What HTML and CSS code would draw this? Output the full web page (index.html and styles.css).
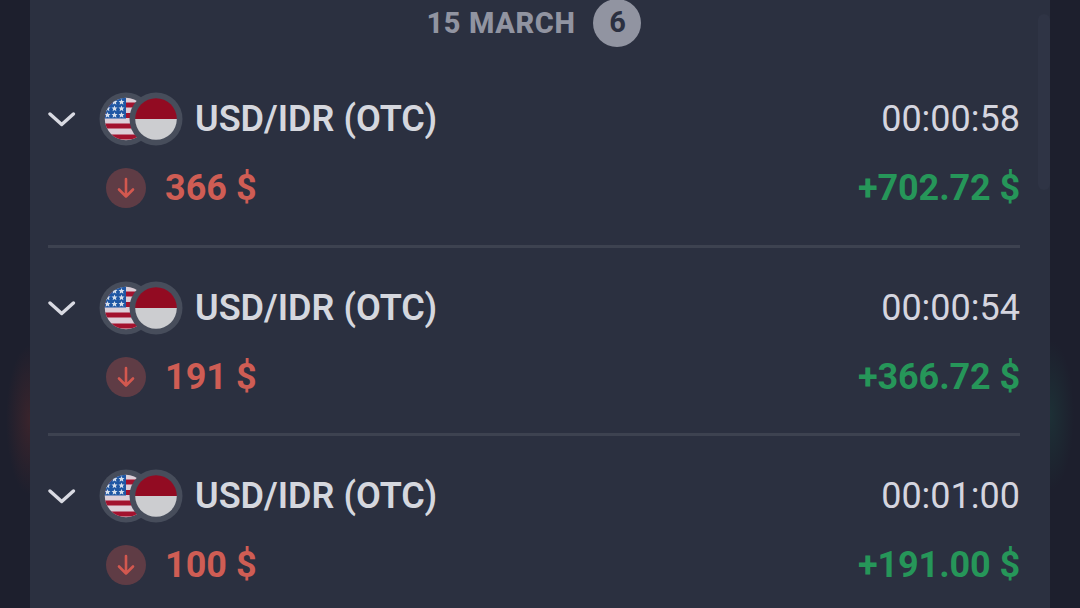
FILE: index.html
```html
<!DOCTYPE html>
<html lang="en">
<head>
    <meta charset="UTF-8">
    <meta name="viewport" content="width=device-width, initial-scale=1.0">
    <title>Trade history</title>
    <link rel="stylesheet" href="styles.css">
</head>
<body>
    <svg class="sprite" width="0" height="0">
        <defs>
            <clipPath id="usClip"><circle cx="27" cy="27" r="21.2"/></clipPath>
            <clipPath id="idClip"><circle cx="57" cy="27" r="20.8"/></clipPath>
            <path id="star" d="M0-3L.9-1 3-.9 1.4.5 1.9 2.7 0 1.5-1.9 2.7-1.4.5-3-.9-.9-1z"/>
            <symbol id="chevron" viewBox="0 0 28 18">
                <path d="M2 4L13.7 14.5 25.4 4" fill="none" stroke="#d9dae2" stroke-width="3.4" stroke-linecap="round" stroke-linejoin="round"/>
            </symbol>
            <symbol id="flags" viewBox="0 0 85 54">
                <circle cx="27" cy="27" r="26.5" fill="#474d5b"/>
                <g clip-path="url(#usClip)">
                    <rect width="54" height="54" fill="#dccfd8"/>
                    <path d="M0 13h54M0 23.5h54M0 34h54M0 45h54" stroke="#a3122e" stroke-width="5.2"/>
                    <rect width="27" height="26.5" fill="#1f57a4"/>
                    <g fill="#d5deeb">
                        <use href="#star" x="15.5" y="10"/>
                        <use href="#star" x="22.5" y="10"/>
                        <use href="#star" x="8.5" y="16.5"/>
                        <use href="#star" x="15.5" y="16.5"/>
                        <use href="#star" x="22.5" y="16.5"/>
                        <use href="#star" x="8.5" y="23"/>
                        <use href="#star" x="15.5" y="23"/>
                        <use href="#star" x="22.5" y="23"/>
                    </g>
                </g>
                <circle cx="57" cy="27" r="26.5" fill="#474d5b"/>
                <g clip-path="url(#idClip)">
                    <rect x="30" width="55" height="27" fill="#920b22"/>
                    <rect x="30" y="27" width="55" height="27" fill="#cccdd0"/>
                </g>
            </symbol>
            <symbol id="down" viewBox="0 0 40 40">
                <circle cx="20" cy="20" r="20" fill="#5f3c45"/>
                <path d="M20 11v17.5M13 21.5l7 7 7-7" fill="none" stroke="#d3584f" stroke-width="2.6" stroke-linecap="round" stroke-linejoin="round"/>
            </symbol>
        </defs>
    </svg>

    <main class="panel">
        <header class="day">
            <h2 class="day-title">15 MARCH</h2>
            <span class="day-count">6</span>
        </header>

        <ul class="trades">
            <li class="trade">
                <div class="trade-main">
                    <svg class="chevron"><use href="#chevron"/></svg>
                    <svg class="flags"><use href="#flags"/></svg>
                    <span class="pair">USD/IDR (OTC)</span>
                    <span class="time">00:00:58</span>
                </div>
                <div class="trade-result">
                    <svg class="direction"><use href="#down"/></svg>
                    <span class="stake">366 $</span>
                    <span class="profit">+702.72 $</span>
                </div>
            </li>
            <li class="trade">
                <div class="trade-main">
                    <svg class="chevron"><use href="#chevron"/></svg>
                    <svg class="flags"><use href="#flags"/></svg>
                    <span class="pair">USD/IDR (OTC)</span>
                    <span class="time">00:00:54</span>
                </div>
                <div class="trade-result">
                    <svg class="direction"><use href="#down"/></svg>
                    <span class="stake">191 $</span>
                    <span class="profit">+366.72 $</span>
                </div>
            </li>
            <li class="trade">
                <div class="trade-main">
                    <svg class="chevron"><use href="#chevron"/></svg>
                    <svg class="flags"><use href="#flags"/></svg>
                    <span class="pair">USD/IDR (OTC)</span>
                    <span class="time">00:01:00</span>
                </div>
                <div class="trade-result">
                    <svg class="direction"><use href="#down"/></svg>
                    <span class="stake">100 $</span>
                    <span class="profit">+191.00 $</span>
                </div>
            </li>
        </ul>
        <div class="scrollbar"></div>
    </main>
</body>
</html>
```
FILE: styles.css
```css
* {
    margin: 0;
    padding: 0;
    box-sizing: border-box;
}

body {
    height: 100vh;
    overflow: hidden;
    background:
        radial-gradient(ellipse 24px 75px at 30px 420px, #3a242c 0%, transparent 100%),
        radial-gradient(ellipse 24px 75px at 1050px 415px, #1d3036 0%, transparent 100%),
        #1d1f2d;
    font-family: Roboto, "Liberation Sans", sans-serif;
}

.sprite {
    position: absolute;
}

.panel {
    position: relative;
    height: 608px;
    margin: 0 30px;
    padding: 0 30px 0 18px;
    background: #2b3040;
    overflow: hidden;
}

.day {
    display: flex;
    justify-content: center;
    align-items: center;
    gap: 18px;
    height: 59px;
    padding: 0 0 13px;
}

.day-title {
    font-size: 29px;
    font-weight: 800;
    letter-spacing: 0.6px;
    color: #9194a1;
}

.day-count {
    width: 48px;
    height: 48px;
    border-radius: 50%;
    background: #9194a1;
    color: #2b3040;
    font-size: 29px;
    font-weight: 700;
    line-height: 47px;
    text-align: center;
}

.trades {
    list-style: none;
}

.trade {
    height: 188.5px;
    padding-top: 33px;
    border-bottom: 3px solid #3d4250;
}

.trade-main,
.trade-result {
    display: flex;
    align-items: center;
}

.trade-main {
    height: 54px;
}

.trade-result {
    height: 40px;
    margin-top: 22px;
    padding-left: 58px;
}

.chevron {
    width: 28px;
    height: 18px;
}

.flags {
    width: 85px;
    height: 54px;
    margin: 0 11px 0 23px;
}

.direction {
    width: 40px;
    height: 40px;
    margin-right: 19px;
}

.pair,
.time,
.stake,
.profit {
    font-size: 36px;
    line-height: 40px;
    white-space: nowrap;
}

.pair {
    font-weight: 600;
    color: #d5d7de;
}

.time {
    margin-left: auto;
    color: #d5d5df;
}

.stake,
.profit {
    font-weight: 700;
}

.stake {
    color: #cf5d54;
}

.profit {
    margin-left: auto;
    letter-spacing: -0.1px;
    color: #269659;
}

.scrollbar {
    position: absolute;
    top: 14px;
    right: 0;
    width: 12px;
    height: 176px;
    border-radius: 6px;
    background: #2f3445;
}
```
